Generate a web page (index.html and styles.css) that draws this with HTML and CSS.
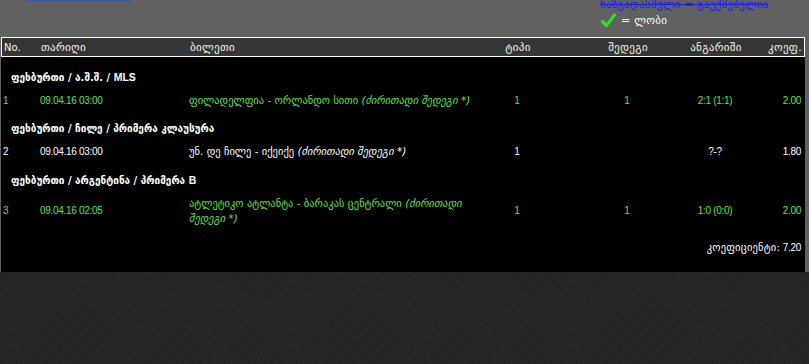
FILE: index.html
```html
<!DOCTYPE html>
<html lang="ka">
<head>
<meta charset="utf-8">
<link rel="stylesheet" href="styles.css">
</head>
<body>
<div class="panel">
  <div class="top">
    <div class="tab-bar"></div>
    <div class="legend">
      <div class="legend-cancel">ხაზგადასმული = გაუქმებულია</div>
      <div class="legend-win">
        <svg class="check" width="15" height="15" viewBox="0 0 15 15"><path d="M1.5 8.5 L5.5 12.5 L13.5 2" fill="none" stroke="#2fe01c" stroke-width="3.2" stroke-linecap="round" stroke-linejoin="round"/></svg>
        <span>= ლობი</span>
      </div>
    </div>
  </div>
  <div class="table">
    <div class="row head">
      <div class="c-no">No.</div>
      <div class="c-date">თარიღი</div>
      <div class="c-match">ბილეთი</div>
      <div class="c-type">ტიპი</div>
      <div class="c-res">შედეგი</div>
      <div class="c-score">ანგარიში</div>
      <div class="c-coef">კოეფ.</div>
    </div>
    <div class="tbody">
      <div class="group">
        <div class="section">ფეხბურთი / ა.შ.შ. / <span class="lat">MLS</span></div>
        <div class="row data win">
          <div class="c-no">1</div>
          <div class="c-date">09.04.16 03:00</div>
          <div class="c-match">ფილადელფია - ორლანდო სითი <i>(ძირითადი შედეგი *)</i></div>
          <div class="c-type">1</div>
          <div class="c-res">1</div>
          <div class="c-score">2:1 (1:1)</div>
          <div class="c-coef">2.00</div>
        </div>
      </div>
      <div class="group">
        <div class="section">ფეხბურთი / ჩილე / პრიმერა კლაუსურა</div>
        <div class="row data open">
          <div class="c-no">2</div>
          <div class="c-date">09.04.16 03:00</div>
          <div class="c-match">უნ. დე ჩილე - იქეიქე <i>(ძირითადი შედეგი *)</i></div>
          <div class="c-type">1</div>
          <div class="c-res"></div>
          <div class="c-score">?-?</div>
          <div class="c-coef">1.80</div>
        </div>
      </div>
      <div class="group">
        <div class="section">ფეხბურთი / არგენტინა / პრიმერა <span class="lat">B</span></div>
        <div class="row data win">
          <div class="c-no">3</div>
          <div class="c-date">09.04.16 02:05</div>
          <div class="c-match">ატლეტიკო ატლანტა - ბარაკას ცენტრალი <i>(ძირითადი შედეგი *)</i></div>
          <div class="c-type">1</div>
          <div class="c-res">1</div>
          <div class="c-score">1:0 (0:0)</div>
          <div class="c-coef">2.00</div>
        </div>
      </div>
      <div class="total"><span class="ka">კოეფიციენტი:</span> 7.20</div>
    </div>
  </div>
</div>
</body>
</html>
```

FILE: styles.css
```css
html, body {
  margin: 0;
  padding: 0;
}
body {
  width: 809px;
  height: 364px;
  overflow: hidden;
  background-color: #262626;
  background-image:
    repeating-linear-gradient(45deg, rgba(255,255,255,0.025) 0 1px, transparent 1px 3px),
    repeating-linear-gradient(-45deg, rgba(0,0,0,0.12) 0 1px, transparent 1px 3px);
  font-family: "DejaVu Sans", "Liberation Sans", sans-serif;
}
.panel {
  background: #616161;
  padding-right: 4px;
  box-sizing: border-box;
  width: 809px;
}
.top {
  height: 37px;
  display: flex;
  justify-content: space-between;
  padding-left: 26px;
}
.tab-bar {
  width: 105px;
  height: 2px;
  background: #3b5aa6;
}
.legend {
  width: 205px;
  margin-top: -2px;
  display: flex;
  flex-direction: column;
  font-size: 11px;
}
.legend-cancel {
  color: #2020e0;
  text-decoration: line-through;
  line-height: 14px;
  letter-spacing: 0.2px;
}
.legend-win {
  display: flex;
  align-items: center;
  gap: 5px;
  color: #fff;
  margin-top: 1px;
  margin-left: 1px;
  letter-spacing: 0.3px;
}
.table {
  margin-left: 1px;
}
.row {
  display: grid;
  grid-template-columns: 37px 149px 302px 56px 30px 104px 72px 52px;
  align-items: center;
}
.c-res { grid-column: 6; }
.head {
  height: 18px;
  border: 1px solid #fff;
  background: #353535;
  color: #f4f4e6;
  font-size: 11px;
  letter-spacing: 0.3px;
}
.head > div { padding-left: 2px; }
.head .c-no { font-size: 10px; letter-spacing: 0; }
.c-type, .c-res, .c-score { text-align: center; }
.head .c-type, .head .c-res, .head .c-score { padding-left: 0; }
.head .c-coef { text-align: right; padding-right: 2px; padding-left: 0; }
.tbody {
  background: #000;
  height: 215px;
  padding-top: 12px;
  box-sizing: border-box;
}
.group { margin-bottom: 13px; }
.section {
  color: #fff;
  font-weight: bold;
  font-size: 10px;
  line-height: 16px;
  padding-left: 10px;
}
.lat {
  font-family: "Liberation Sans", sans-serif;
  font-size: 10.5px;
}
.data {
  margin-top: 7px;
  font-size: 10.5px;
  line-height: 14px;
}
.data > div { padding-left: 2px; }
.data .c-no, .data .c-date, .data .c-type, .data .c-res, .data .c-score, .data .c-coef, .total {
  font-family: "Liberation Sans", sans-serif;
  font-size: 10px;
  letter-spacing: -0.3px;
}
.data .c-type, .data .c-res, .data .c-score { padding-left: 0; }
.data .c-coef { text-align: right; padding-right: 2px; }
.data .c-match { padding-right: 8px; line-height: 15px; }
.win { color: #5ee34a; }
.open { color: #fff; }
.total {
  color: #fff;
  text-align: right;
  padding-right: 4px;
  line-height: 16px;
}
.total .ka {
  font-family: "DejaVu Sans", sans-serif;
  font-size: 10.5px;
  letter-spacing: 0.2px;
}
```
